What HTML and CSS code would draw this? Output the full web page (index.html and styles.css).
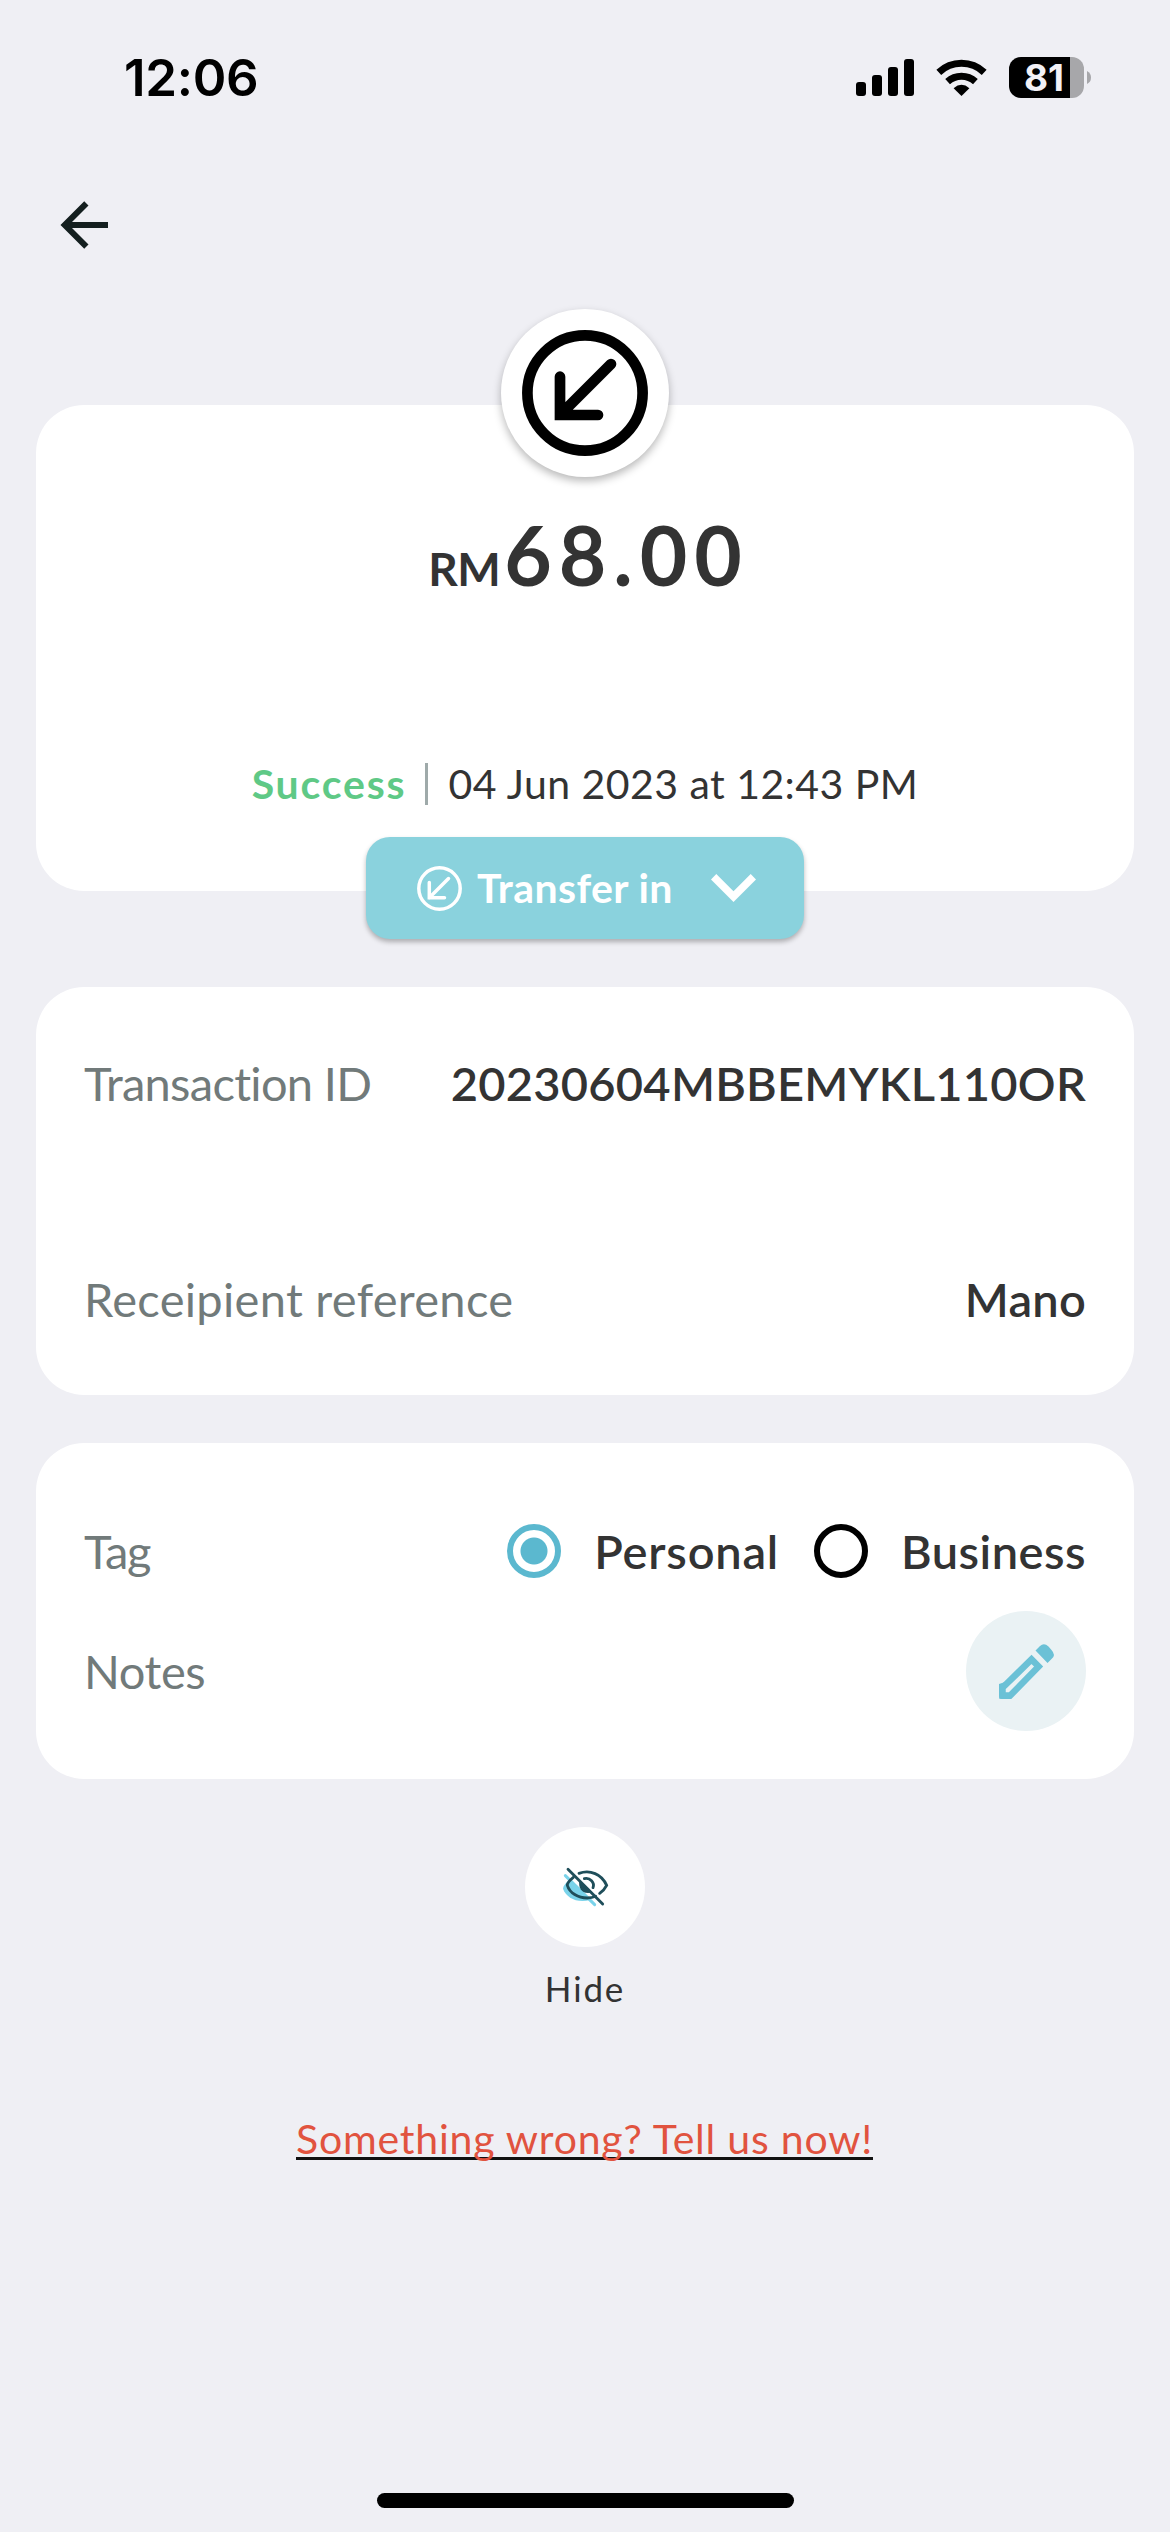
FILE: index.html
```
<!DOCTYPE html>
<html lang="en">
<head>
<meta charset="utf-8">
<title>Transaction details</title>
<link rel="stylesheet" href="styles.css">
</head>
<body>
<header class="status-bar">
  <span class="clock">12:06</span>
  <div class="indicators">
    <svg class="signal" viewBox="0 0 58 37"><rect y="23" width="10" height="14" rx="3"/><rect x="16" y="16" width="10" height="21" rx="3"/><rect x="32" y="8" width="10" height="29" rx="3"/><rect x="48" width="10" height="37" rx="3"/></svg>
    <svg class="wifi" viewBox="0 0 51 37"><path d="M25.5 37 L17.6 29.2 Q25.5 22.4 33.4 29.2Z"/><path d="M11.6 22.6 A20.5 20.5 0 0 1 39.4 22.6" /><path d="M2.8 13.4 A33 33 0 0 1 48.2 13.4"/></svg>
    <div class="battery"><span class="battery-level">81</span></div>
    <svg class="battery-cap" viewBox="0 0 4 13"><path d="M0 0Q4 2 4 6.5T0 13Z"/></svg>
  </div>
</header>
<nav class="nav">
  <svg class="back" viewBox="0 0 24 24"><path d="M20,11V13H8L13.5,18.5L12.08,19.92L4.16,12L12.08,4.08L13.5,5.5L8,11H20Z"/></svg>
</nav>
<main class="content">
  <section class="card summary">
    <div class="badge">
      <svg viewBox="0 0 126 126"><circle cx="63" cy="63" r="57.6"/><path d="M38 46.7V85H76M38 85L89 34"/></svg>
    </div>
    <div class="amount"><span class="currency">RM</span><span class="value">68.00</span></div>
    <div class="state"><span class="success">Success</span><i class="divider"></i><span class="date">04 Jun 2023 at 12:43 PM</span></div>
    <button class="category">
      <svg class="category-icon" viewBox="0 0 45 45"><circle cx="22.5" cy="22.5" r="20.7"/><path d="M12.3 16.5V31.8H27.5M12.3 31.8L31.5 12.6"/></svg>
      <span class="category-name">Transfer in</span>
      <svg class="chevron" viewBox="6 8.58 12 7.42"><path d="M7.41,8.58L12,13.17L16.59,8.58L18,10L12,16L6,10L7.41,8.58Z"/></svg>
    </button>
  </section>

  <section class="card details">
    <div class="row"><span class="label label-id">Transaction ID</span><span class="data">20230604MBBEMYKL110OR</span></div>
    <div class="row"><span class="label label-reference">Receipient reference</span><span class="data">Mano</span></div>
  </section>

  <section class="card tagging">
    <div class="row">
      <span class="label label-tag">Tag</span>
      <div class="options">
        <span class="radio selected"></span><span class="option personal">Personal</span>
        <span class="radio"></span><span class="option business">Business</span>
      </div>
    </div>
    <div class="row">
      <span class="label label-notes">Notes</span>
      <div class="edit">
        <svg viewBox="0 0 55 55"><path d="M32.5 15.4 39.6 22.5 11.2 51.5H3.5V43.8Z" fill="none" stroke="#6bc1d6" stroke-width="6.5"/><path d="M0 52V40L6 38V49H15L12 55H3Q0 55 0 52Z"/><path d="M36.5 6.5 41 2Q45-1.8 49.5 2.5L52.5 6Q57 11 53 14.5L48.5 19Z"/></svg>
      </div>
    </div>
  </section>

  <div class="hide">
    <div class="hide-button">
      <svg viewBox="180 168 150 125">
        <path d="M208 209C196 220 189 228 189 236C197 258 219 273 247 273Q260 273 270 270Z" fill="#7ad3ea"/>
        <path d="M196 197L284 284" stroke="#7ad3ea" stroke-width="9"/>
        <path d="M220 202C209 211 201 219 202 226C209 249 234 264 262 264Q276 264 287 259M237 190C270 178 305 192 320 226Q313 240 299 250" class="line"/>
        <path d="M238 211C235 232 243 249 264 249Q272 249 277 247Z" fill="#1f4e5a"/>
        <path d="M253 206C270 202 285 217 279 233M204 178L308 282" class="line"/>
      </svg>
    </div>
    <span class="hide-label">Hide</span>
  </div>

  <a class="report">Something wrong? Tell us now!</a>
</main>
<footer class="home"><i class="home-bar"></i></footer>
</body>
</html>
```
FILE: styles.css
```
* { box-sizing: border-box; }
body { margin: 0; width: 1170px; height: 2532px; display: flex; flex-direction: column; background: #efeff4; color: #333; font-family: Lato, "Open Sans", sans-serif; overflow: hidden; }
svg { display: block; flex: none; overflow: visible; }
span, a { white-space: nowrap; }

.status-bar { height: 141px; padding: 0 79px 0 124px; display: flex; justify-content: space-between; color: #000; }
.clock { padding-top: 48px; font: 600 51px/60px Inter, sans-serif; letter-spacing: -0.3px; }
.indicators { display: flex; align-items: center; height: 41px; margin-top: 57px; }
.signal { width: 58px; height: 37px; }
.wifi { width: 51px; height: 37px; margin: 0 22px; }
.wifi path + path { fill: none; stroke: #000; stroke-width: 7; }
.battery { width: 75px; height: 41px; border-radius: 12px; background: linear-gradient(90deg, #000 61px, #a7a7aa 61px); }
.battery-level { display: block; padding-left: 15px; color: #f2f1f6; font: 700 37px/41px Inter, sans-serif; letter-spacing: 0; }
.battery-cap { width: 4px; height: 13px; margin-left: 3px; fill: #a7a7aa; }

.nav { height: 264px; padding: 48px; }
.back { width: 72px; height: 72px; fill: #141f1f; }

.content { flex: 1; padding: 0 36px; display: flex; flex-direction: column; }
.card { position: relative; background: #fff; border-radius: 48px; }
.summary { height: 486px; padding-top: 104px; }
.badge { position: absolute; left: 465px; top: -96px; width: 168px; height: 168px; padding: 21px; border-radius: 50%; background: #fff; box-shadow: 0 4px 8px rgba(0, 0, 0, .28); }
.badge svg { width: 126px; height: 126px; fill: none; stroke: #000; stroke-width: 10.7; stroke-linecap: round; }
.amount { display: flex; justify-content: center; align-items: baseline; gap: 4px; line-height: 90px; font-weight: 700; }
.currency { font-size: 46px; letter-spacing: -.58px; }
.value { font-size: 82px; letter-spacing: 6.96px; margin-right: -7px; }
.state { display: flex; justify-content: center; align-items: center; margin-top: 140px; height: 60px; font-size: 41px; line-height: 60px; }
.success { color: #5fc986; font-weight: 700; letter-spacing: 1.84px; }
.divider { width: 3px; height: 42px; margin: 0 20px 0 19px; background: #9faaaa; }
.date { letter-spacing: .46px; }
.category { position: absolute; left: 330px; top: 432px; width: 438px; height: 102px; padding: 0 48px 0 51px; display: flex; align-items: center; border: 0; border-radius: 24px; background: #8ad2dd; color: #fff; box-shadow: 0 3px 5px rgba(0, 0, 0, .28); }
.category-icon { width: 45px; height: 45px; fill: none; stroke: #fff; stroke-width: 3.5; stroke-linecap: round; }
.category-name { margin-left: 15px; font: 700 41px/60px Lato, sans-serif; letter-spacing: .39px; }
.chevron { width: 45px; height: 28px; margin-left: auto; fill: #fff; }

.row { display: flex; justify-content: space-between; align-items: center; font-size: 47px; line-height: 72px; }
.label { color: #717a7a; }
.data, .option { font-weight: 600; }
.data { letter-spacing: .25px; }
.label-id { letter-spacing: -.7px; }
.label-reference { letter-spacing: .3px; }
.label-tag { letter-spacing: -1.4px; }
.label-notes { letter-spacing: -.4px; }
.details { margin-top: 96px; height: 408px; padding: 60px 48px; display: flex; flex-direction: column; justify-content: space-between; }
.tagging { margin-top: 48px; height: 336px; padding: 48px; }
.tagging .row { height: 120px; }
.options { display: flex; align-items: center; }
.radio { width: 54px; height: 54px; border: 6px solid #000; border-radius: 50%; }
.radio.selected { border-color: #5bb8cf; background: radial-gradient(circle, #5bb8cf 13px, transparent 14px); }
.option { margin-left: 33px; }
.personal { letter-spacing: .78px; margin-right: 35px; }
.business { letter-spacing: .49px; }
.edit { width: 120px; height: 120px; display: flex; align-items: center; justify-content: center; border-radius: 50%; background: #eaf2f4; }
.edit svg { width: 55px; height: 55px; fill: #6bc1d6; }

.hide { margin-top: 48px; display: flex; flex-direction: column; align-items: center; }
.hide-button { width: 120px; height: 120px; display: flex; align-items: center; justify-content: center; border-radius: 50%; background: #fff; }
.hide-button svg { width: 50px; height: 41.67px; fill: none; stroke-linecap: round; }
.line { stroke: #1f4e5a; stroke-width: 8.5; }
.hide-label { margin-top: 16px; font-size: 35px; line-height: 50px; letter-spacing: 1.85px; }
.report { align-self: center; margin-top: 96px; padding: 0 3px 0 2px; font-size: 41px; line-height: 60px; letter-spacing: .79px; color: #e1533f; text-decoration: underline #111 2.5px; text-underline-offset: 3px; text-decoration-skip-ink: none; }

.home { height: 39px; display: flex; justify-content: center; }
.home-bar { width: 417px; height: 15px; border-radius: 8px; background: #000; }
```
